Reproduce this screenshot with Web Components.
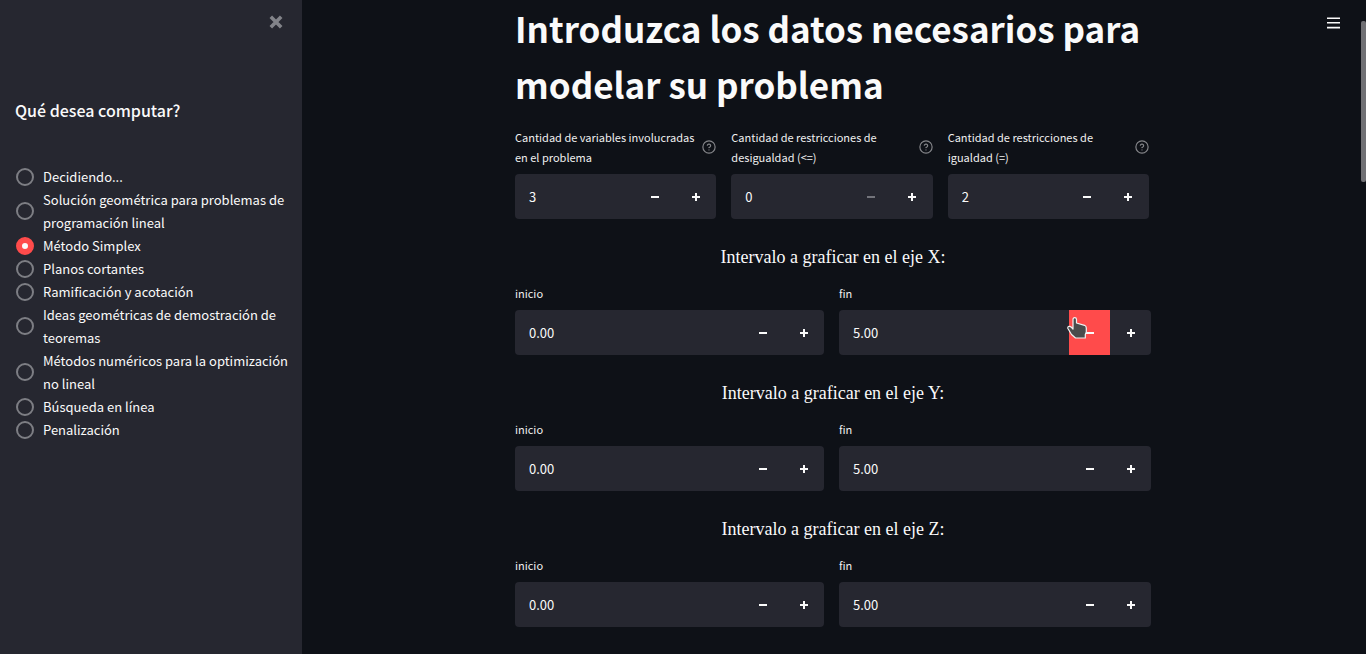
<!DOCTYPE html>
<html lang="es">
<head>
<meta charset="utf-8">
<meta name="viewport" content="width=device-width, initial-scale=1">
<title>Método Simplex</title>
<style>
  html, body { margin: 0; min-height: 100%; background: #0e1117; }
  body {
    color: #fafafa;
    font: 13px/23px "Noto Sans CJK SC", "Noto Sans", sans-serif;
  }
</style>
</head>
<body>
<app-shell>
  <side-bar slot="sidebar" heading="Qué desea computar?">
    <radio-option>Decidiendo...</radio-option>
    <radio-option>Solución geométrica para problemas de programación lineal</radio-option>
    <radio-option checked>Método Simplex</radio-option>
    <radio-option>Planos cortantes</radio-option>
    <radio-option>Ramificación y acotación</radio-option>
    <radio-option>Ideas geométricas de demostración de teoremas</radio-option>
    <radio-option>Métodos numéricos para la optimización no lineal</radio-option>
    <radio-option>Búsqueda en línea</radio-option>
    <radio-option>Penalización</radio-option>
  </side-bar>
  <page-title>Introduzca los datos necesarios para modelar su problema</page-title>
  <field-row columns="3">
    <number-field value="3" help>Cantidad de variables involucradas en el problema</number-field>
    <number-field value="0" help at-min>Cantidad de restricciones de desigualdad (&lt;=)</number-field>
    <number-field value="2" help>Cantidad de restricciones de igualdad (=)</number-field>
  </field-row>
  <axis-range axis="X" active></axis-range>
  <axis-range axis="Y"></axis-range>
  <axis-range axis="Z"></axis-range>
</app-shell>

<script>
class Base extends HTMLElement {
  connectedCallback() {
    if (this.shadowRoot) return;
    this.attachShadow({ mode: "open" }).innerHTML = this.render();
    this.ready();
  }
  ready() {}
}

customElements.define("app-shell", class extends Base {
  render() {
    return `<style>
      :host { display: grid; grid-template-columns: 302px minmax(0, 1fr); min-height: 100vh; position: relative; }
      main { padding: 0 17px 20px 15px; display: flex; justify-content: center; }
      .content { width: 100%; max-width: 636px; }
      .menu {
        position: absolute; top: 12px; right: 22px; width: 22px; height: 22px; padding: 0;
        border: 0; background: none; color: #fafafa; display: grid; place-items: center;
      }
      .thumb { position: absolute; top: 21px; right: 0; width: 5px; height: 161px; border-radius: 2px; background: #707074; }
    </style>
    <slot name="sidebar"></slot>
    <main><div class="content"><slot></slot></div></main>
    <button class="menu" aria-label="Menú">
      <svg width="13" height="12" viewBox="0 0 13 12" fill="currentColor"><path d="M0 .5h13V2H0zM0 5h13v1.5H0zM0 9.8h13v1.7H0z"/></svg>
    </button>
    <div class="thumb"></div>`;
  }
});

customElements.define("side-bar", class extends Base {
  render() {
    return `<style>
      :host { display: block; background: #262730; padding: 12px 12px 15px 15px; box-sizing: border-box; }
      .top { display: flex; justify-content: flex-end; padding-right: 4px; }
      .close { width: 20px; height: 20px; padding: 0; border: 0; background: none; color: #828389; display: grid; place-items: center; }
      h2 { margin: 65px 0 42px; font-size: 16px; line-height: 26px; font-weight: 500; }
    </style>
    <div class="top"><button class="close" aria-label="Cerrar">
      <svg width="14" height="14" viewBox="0 0 14 14" fill="none" stroke="currentColor" stroke-width="3.6"><path d="M1.8 1.8l10.4 10.4M12.2 1.8L1.8 12.2"/></svg>
    </button></div>
    <h2>${this.getAttribute("heading")}</h2>
    <div role="radiogroup"><slot></slot></div>`;
  }
});

customElements.define("radio-option", class extends Base {
  render() {
    return `<style>
      :host { display: block; }
      label { display: flex; align-items: center; gap: 9px; padding-left: 1px; }
      input {
        appearance: none; flex: none; width: 18px; height: 18px; margin: 0; border-radius: 50%;
        border: 2px solid #7d7e84; background: #262730;
      }
      input:checked { border: 6px solid #ff4b4b; background: #fafafa; }
    </style>
    <label><input type="radio" name="mode" ${this.hasAttribute("checked") ? "checked" : ""}><span><slot></slot></span></label>`;
  }
  ready() {
    this.shadowRoot.querySelector("input").addEventListener("change", () => {
      for (const other of this.parentElement.querySelectorAll("radio-option"))
        if (other !== this) other.shadowRoot.querySelector("input").checked = false;
    });
  }
});

customElements.define("page-title", class extends Base {
  render() {
    return `<style>
      :host { display: block; }
      h1 { margin: 0 0 15px; font-size: 35px; line-height: 56px; font-weight: 700; }
    </style><h1><slot></slot></h1>`;
  }
});

customElements.define("field-row", class extends Base {
  render() {
    return `<style>
      :host { display: grid; gap: 15px; }
      :host([columns="3"]) { grid-template-columns: repeat(3, minmax(0, 1fr)); padding-right: 2px; }
      :host([columns="2"]) { grid-template-columns: minmax(0, 309fr) minmax(0, 312fr); }
    </style><slot></slot>`;
  }
});

customElements.define("number-field", class extends Base {
  render() {
    const help = this.hasAttribute("help") ? `<button class="help" aria-label="Ayuda">
      <svg width="14" height="14" viewBox="0 0 24 24" fill="none" stroke="currentColor" stroke-width="2" stroke-linecap="round" stroke-linejoin="round"><circle cx="12" cy="12" r="10.5"/><path d="M9.1 9a3 3 0 0 1 5.8 1c0 2-3 3-3 3M12 17v.1"/></svg>
    </button>` : "";
    const cursor = this.hasAttribute("active") ? `
      <svg class="cursor" width="20" height="22" viewBox="0 0 20 22"><path d="M6 12V2.4Q6 .7 7.7.7T9.5 2.4V6l8 2.3Q19.300 9 19.300 11v4l-1 2.500V21H8.500L4.500 17.500.9 11.500Q.4 9.800 2 9.300 3.500 9.200 4.600 10.500z" fill="#4a4c4c" stroke="#f2f2f2" stroke-width="1.200" stroke-linejoin="round"/></svg>` : "";
    return `<style>
      :host { display: block; min-width: 0; }
      .caption { display: flex; align-items: center; justify-content: space-between; margin-bottom: 7px; }
      label { font-size: 11px; line-height: 20px; color: #f0f0f0; }
      button { border: 0; padding: 0; background: none; color: #fafafa; display: grid; place-items: center; }
      .help { flex: none; width: 14px; height: 14px; color: #85868a; }
      .box { display: flex; height: 45px; border-radius: 4px; background: #262730; }
      input {
        appearance: textfield; flex: 1; min-width: 0; margin: 0; padding: 0 14px; border: 0; outline: 0;
        background: none; color: #fafafa; font: inherit;
      }
      input::-webkit-inner-spin-button { appearance: none; margin: 0; }
      .step { position: relative; width: 41px; }
      .step:last-child { border-radius: 0 4px 4px 0; }
      .active { background: #ff4b4b; }
      .step:disabled { color: #73747b; }
      .cursor { position: absolute; left: -2px; top: 7px; }
    </style>
    <div class="caption"><label for="value"><slot></slot></label>${help}</div>
    <div class="box">
      <input id="value" type="number" step="any" value="${this.getAttribute("value")}">
      <button class="step ${this.hasAttribute("active") ? "active" : ""}" aria-label="Disminuir" ${this.hasAttribute("at-min") ? "disabled" : ""}>
        <svg width="8" height="8" viewBox="0 0 8 8"><path d="M0 3h8v2H0z" fill="currentColor"/></svg>${cursor}
      </button>
      <button class="step" aria-label="Aumentar">
        <svg width="8" height="8" viewBox="0 0 8 8"><path d="M3 0h2v3h3v2H5v3H3V5H0V3h3z" fill="currentColor"/></svg>
      </button>
    </div>`;
  }
});

customElements.define("axis-range", class extends Base {
  render() {
    return `<style>
      :host { display: block; }
      h3 {
        margin: 25px 0 13px; text-align: center; font: 400 18px/26px "Liberation Serif", serif;
      }
    </style>
    <h3>Intervalo a graficar en el eje ${this.getAttribute("axis")}:</h3>
    <field-row columns="2">
      <number-field value="0.00">inicio</number-field>
      <number-field value="5.00" ${this.hasAttribute("active") ? "active" : ""}>fin</number-field>
    </field-row>`;
  }
});
</script>
</body>
</html>
